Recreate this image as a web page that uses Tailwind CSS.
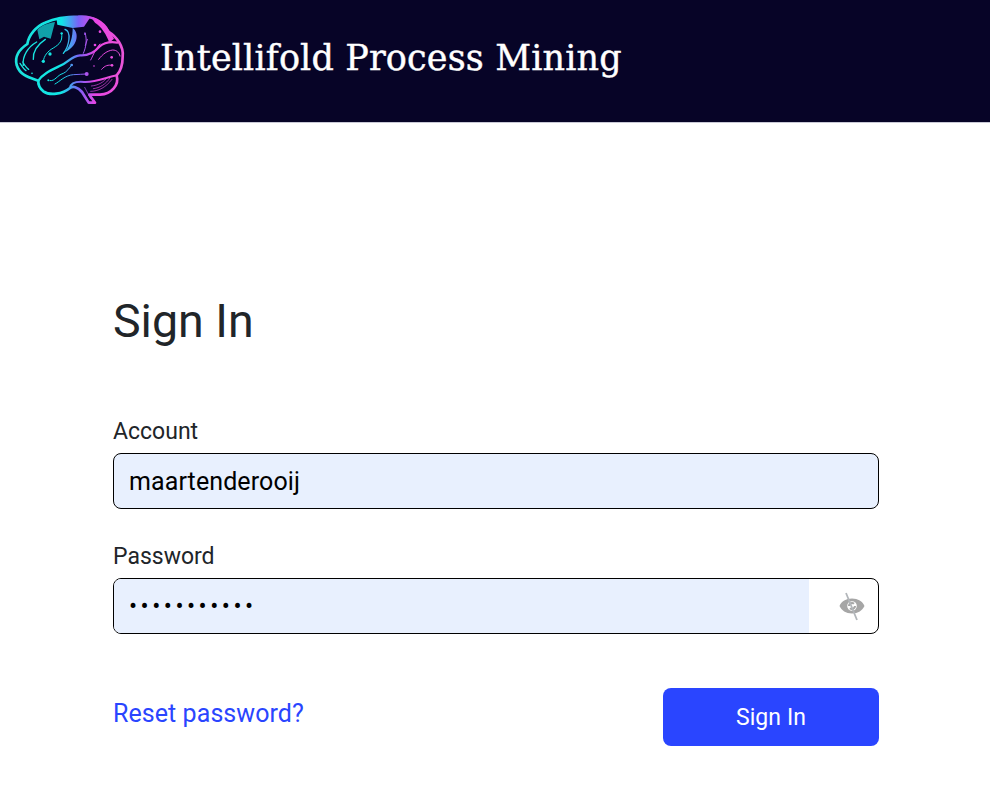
<!DOCTYPE html>
<html lang="en">
<head>
  <meta charset="UTF-8" />
  <meta name="viewport" content="width=device-width, initial-scale=1.0"/>
  <title>Sign In</title>
  <script src="https://cdn.jsdelivr.net/npm/@tailwindcss/browser@4"></script>
</head>
<body class="bg-white font-['Roboto',sans-serif] text-[#212529] h-[802px] overflow-hidden">
  <header class="h-[123px] bg-[#070427] flex items-center border-b border-[#c9c9d6]">
    <svg class="w-[140px] h-[122px] shrink-0" viewBox="0 0 420 366" fill="none" stroke-linecap="round" stroke-linejoin="round">
      <defs>
        <linearGradient id="brain" x1="50" y1="0" x2="370" y2="0" gradientUnits="userSpaceOnUse">
          <stop offset="0" stop-color="#1ce3dc"/>
          <stop offset="0.42" stop-color="#10e6e6"/>
          <stop offset="0.58" stop-color="#7a62f8"/>
          <stop offset="0.74" stop-color="#e845e4"/>
          <stop offset="1" stop-color="#ea55d8"/>
        </linearGradient>
      </defs>
      <g fill="url(#brain)">
        <path opacity="0.7" d="M112 90C125 76 140 70 165 66L152 116L132 110L118 118Z"/>
        <path d="M170 60C200 50 240 46 272 50L252 80L218 84L172 74Z"/>
        <path d="M272 50C300 55 325 80 342 116L328 128C320 105 305 80 285 68Z"/>
        <path d="M218 84C240 100 232 140 195 156C212 135 218 110 218 84Z"/>
      </g>
      <g stroke="url(#brain)">
        <path stroke-width="8" d="M115 242C85 232 60 226 50 195C44 172 55 150 82 132C86 105 110 78 135 68C165 55 200 50 235 50C275 46 312 65 325 95C350 110 372 140 368 170C368 195 360 215 350 226C358 255 335 282 300 284L268 284L285 308L266 308L246 276C232 260 218 258 210 264C188 282 150 288 130 274C118 264 114 252 115 242Z"/>
        <path stroke-width="7" d="M115 242C128 222 150 212 175 200C205 190 212 168 240 166C265 168 282 158 298 140C315 126 335 125 352 128"/>
        <path stroke-width="6" d="M210 264C212 250 228 244 252 246C285 248 320 232 350 226"/>
        <path stroke-width="4" d="M70 196C66 168 85 140 110 126M100 178C98 150 115 132 136 118M195 88C215 95 208 138 190 160M60 190C68 202 72 208 78 212M68 186C74 196 80 204 86 208"/>
        <path stroke-width="3" d="M185 100C188 122 180 132 160 144C142 154 132 168 130 183M150 242C166 244 170 226 190 220C200 216 208 204 215 195M165 252C180 244 195 226 220 224C234 222 248 224 260 222M255 98C262 120 258 142 250 160M262 118L256 136M296 178C308 162 322 152 338 150C350 150 358 158 360 168M305 208C315 196 325 194 336 196M272 180C278 170 284 150 300 132"/>
        <path stroke-width="2" d="M254 262L272 296M272 274C295 274 318 262 336 238M280 266C300 264 318 252 330 234M274 258C296 256 312 246 322 232"/>
      </g>
      <g fill="url(#brain)">
        <circle cx="130" cy="184" r="5"/><circle cx="150" cy="162" r="5"/><circle cx="185" cy="100" r="3.500"/><circle cx="215" cy="195" r="4"/><circle cx="260" cy="222" r="6"/><circle cx="145" cy="241" r="3"/><circle cx="300" cy="95" r="4"/><circle cx="285" cy="135" r="4"/><circle cx="255" cy="102" r="3"/><circle cx="335" cy="172" r="4"/><circle cx="336" cy="196" r="4"/><circle cx="96" cy="220" r="2.500"/><circle cx="282" cy="198" r="2.500"/>
      </g>
    </svg>
    <h1 class="ml-[20px] font-['DejaVu_Serif',serif] text-[35px] leading-none tracking-[0.15px] [-webkit-text-stroke:0.4px_white] text-white mt-[-6px]">Intellifold Process Mining</h1>
  </header>

  <main class="pl-[113px] pr-[111px]">
    <h2 class="mt-[168px] text-[46.500px] leading-[60px] text-[#212529]">Sign In</h2>

    <label class="block mt-[65px] text-[23px] leading-[32px]" for="account">Account</label>
    <input id="account" class="block mt-[5px] w-full h-[56px] px-[15px] rounded-[8px] border border-black bg-[#e8f0fe] text-[25px] tracking-[0.1px] text-black outline-none" value="maartenderooij" />

    <label class="block mt-[32px] text-[23px] leading-[32px]" for="password">Password</label>
    <div class="mt-[5px] h-[56px] flex rounded-[8px] border border-black overflow-hidden bg-white">
      <input id="password" type="password" class="flex-1 min-w-0 px-[15px] bg-[#e8f0fe] text-[24px] tracking-[3.500px] text-black outline-none" value="maartenroo1" />
      <div class="w-[69px] flex items-center justify-center pl-[16px]">
        <svg class="w-[30px] h-[30px]" viewBox="0 0 30 30" fill="none">
          <path fill="#a6a6a6" fill-rule="evenodd" d="M2.500 15C4.500 10.500 9 7.600 15 7.600S25.500 10.500 27.500 15C25.500 19.500 21 22.400 15 22.400S4.500 19.500 2.500 15ZM15 10.200a4.800 4.800 0 1 0 0 9.600a4.800 4.800 0 0 0 0-9.600Z"/>
          <path stroke="#a6a6a6" stroke-width="2.200" d="M18 15a3 3 0 0 1-5 2.200M12 15a3 3 0 0 1 5-2.200"/>
          <path stroke="#b2b6ba" stroke-width="1.800" d="M9 2L20 29"/>
        </svg>
      </div>
    </div>

    <div class="mt-[54px] flex items-start justify-between">
      <a href="#" class="mt-[1px] text-[25px] leading-[50px] tracking-[0.07px] text-[#2a45ff]">Reset password?</a>
      <button class="w-[216px] h-[58px] pt-[2px] rounded-[8px] bg-[#2a45ff] text-white text-[23px] tracking-[0.1px]">Sign In</button>
    </div>
  </main>
</body>
</html>
